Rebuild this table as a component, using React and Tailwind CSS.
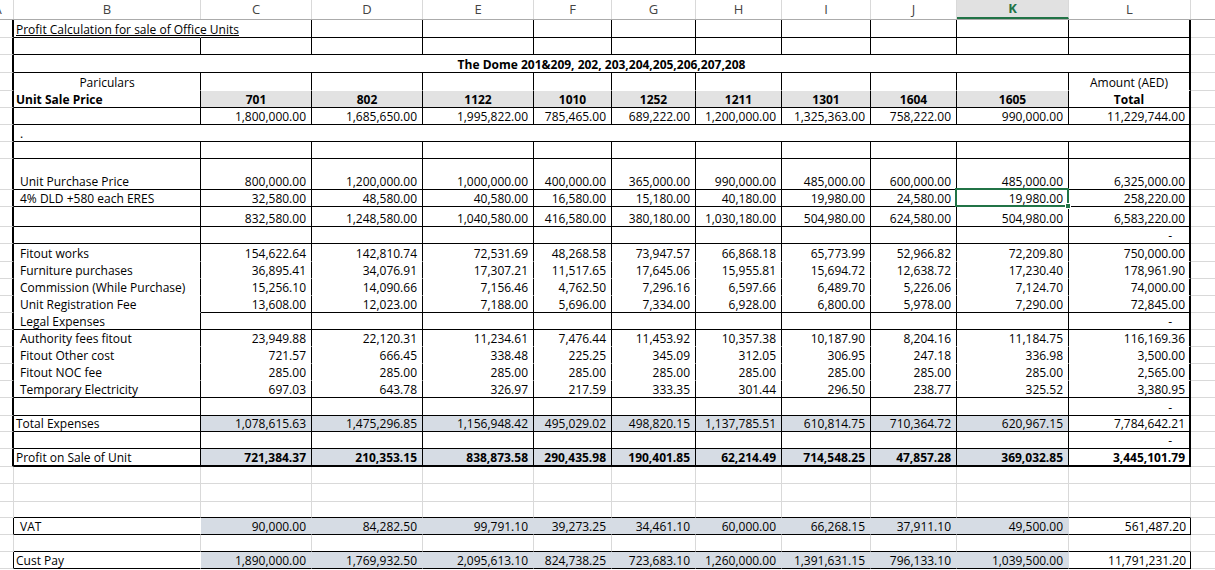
import React from 'react';

const W = ['w-[14px]', 'w-[187px]', 'w-[111px]', 'w-[111px]', 'w-[111px]', 'w-[78px]', 'w-[84px]', 'w-[86px]', 'w-[89px]', 'w-[86px]', 'w-[112px]', 'w-[122px]'];
const LETTERS = ['A', 'B', 'C', 'D', 'E', 'F', 'G', 'H', 'I', 'J', 'K', 'L'];

const BOTTOM = {
  black: 'border-b border-b-black',
  none: 'border-b border-b-transparent',
  thick: 'border-b-2 border-b-black',
  grid: 'border-b border-b-[#d9d9d9]',
};

const rows = [
  { h: 'h-[18px]', v: 'title', label: 'Profit Calculation for sale of Office Units', labelCls: 'pl-[2px] underline whitespace-nowrap relative z-10' },
  { h: 'h-[17px]' },
  { h: 'h-[18px]', merged: 'The Dome 201&209, 202, 203,204,205,206,207,208', mergedCls: 'justify-center font-bold' },
  { h: 'h-[18px]', label: 'Pariculars', labelCls: 'justify-center', total: 'Amount (AED)', totalCls: 'justify-center', bottom: 'none' },
  { h: 'h-[17px]', label: 'Unit Sale Price', labelCls: 'pl-[2px] font-bold', vals: ['701', '802', '1122', '1010', '1252', '1211', '1301', '1604', '1605'], fill: 'gray', bold: true, center: true, total: 'Total', totalCls: 'justify-center font-bold' },
  { h: 'h-[17px]', vals: ['1,800,000.00', '1,685,650.00', '1,995,822.00', '785,465.00', '689,222.00', '1,200,000.00', '1,325,363.00', '758,222.00', '990,000.00'], total: '11,229,744.00' },
  { h: 'h-[17px]', merged: '.', mergedCls: 'pl-[6px]' },
  { h: 'h-[17px]' },
  { h: 'h-[31px]', label: 'Unit Purchase Price', vals: ['800,000.00', '1,200,000.00', '1,000,000.00', '400,000.00', '365,000.00', '990,000.00', '485,000.00', '600,000.00', '485,000.00'], total: '6,325,000.00' },
  { h: 'h-[17px]', label: '4% DLD +580 each ERES', vals: ['32,580.00', '48,580.00', '40,580.00', '16,580.00', '15,180.00', '40,180.00', '19,980.00', '24,580.00', '19,980.00'], total: '258,220.00', sel: true },
  { h: 'h-[20px]', vals: ['832,580.00', '1,248,580.00', '1,040,580.00', '416,580.00', '380,180.00', '1,030,180.00', '504,980.00', '624,580.00', '504,980.00'], total: '6,583,220.00' },
  { h: 'h-[17px]', total: '-' },
  { h: 'h-[18px]', label: 'Fitout works', vals: ['154,622.64', '142,810.74', '72,531.69', '48,268.58', '73,947.57', '66,868.18', '65,773.99', '52,966.82', '72,209.80'], total: '750,000.00', bottom: 'none' },
  { h: 'h-[17px]', label: 'Furniture purchases', vals: ['36,895.41', '34,076.91', '17,307.21', '11,517.65', '17,645.06', '15,955.81', '15,694.72', '12,638.72', '17,230.40'], total: '178,961.90', bottom: 'none' },
  { h: 'h-[17px]', label: 'Commission (While Purchase)', vals: ['15,256.10', '14,090.66', '7,156.46', '4,762.50', '7,296.16', '6,597.66', '6,489.70', '5,226.06', '7,124.70'], total: '74,000.00', bottom: 'none' },
  { h: 'h-[17px]', label: 'Unit Registration Fee', vals: ['13,608.00', '12,023.00', '7,188.00', '5,696.00', '7,334.00', '6,928.00', '6,800.00', '5,978.00', '7,290.00'], total: '72,845.00', bottom: 'partial' },
  { h: 'h-[17px]', label: 'Legal Expenses', total: '-' },
  { h: 'h-[17px]', label: 'Authority fees fitout', vals: ['23,949.88', '22,120.31', '11,234.61', '7,476.44', '11,453.92', '10,357.38', '10,187.90', '8,204.16', '11,184.75'], total: '116,169.36', bottom: 'none' },
  { h: 'h-[17px]', label: 'Fitout Other cost', vals: ['721.57', '666.45', '338.48', '225.25', '345.09', '312.05', '306.95', '247.18', '336.98'], total: '3,500.00', bottom: 'none' },
  { h: 'h-[17px]', label: 'Fitout NOC fee', vals: ['285.00', '285.00', '285.00', '285.00', '285.00', '285.00', '285.00', '285.00', '285.00'], total: '2,565.00', bottom: 'none' },
  { h: 'h-[17px]', label: 'Temporary Electricity', vals: ['697.03', '643.78', '326.97', '217.59', '333.35', '301.44', '296.50', '238.77', '325.52'], total: '3,380.95' },
  { h: 'h-[18px]', total: '-' },
  { h: 'h-[16px]', label: 'Total Expenses', labelCls: 'pl-[2px]', vals: ['1,078,615.63', '1,475,296.85', '1,156,948.42', '495,029.02', '498,820.15', '1,137,785.51', '610,814.75', '710,364.72', '620,967.15'], total: '7,784,642.21', fill: 'blue' },
  { h: 'h-[17px]', total: '-' },
  { h: 'h-[18px]', label: 'Profit on Sale of Unit', labelCls: 'pl-[2px]', vals: ['721,384.37', '210,353.15', '838,873.58', '290,435.98', '190,401.85', '62,214.49', '714,548.25', '47,857.28', '369,032.85'], total: '3,445,101.79', fill: 'blue', bold: true, bottom: 'thick' },
  { h: 'h-[17px]', zone: 'outside', bottom: 'grid' },
  { h: 'h-[18px]', zone: 'outside', bottom: 'grid' },
  { h: 'h-[16px]', zone: 'outside', bottom: 'black' },
  { h: 'h-[17px]', zone: 'boxed', label: 'VAT', vals: ['90,000.00', '84,282.50', '99,791.10', '39,273.25', '34,461.10', '60,000.00', '66,268.15', '37,911.10', '49,500.00'], total: '561,487.20', fill: 'blue' },
  { h: 'h-[17px]', zone: 'outside', bottom: 'black' },
  { h: 'h-[17px]', zone: 'boxed', label: 'Cust Pay', labelCls: 'pl-[2px]', vals: ['1,890,000.00', '1,769,932.50', '2,095,613.10', '824,738.25', '723,683.10', '1,260,000.00', '1,391,631.15', '796,133.10', '1,039,500.00'], total: '11,791,231.20', fill: 'blue' },
];

function edgeClass(zone) {
  if (zone === 'table') return 'border-r-2 border-r-black';
  if (zone === 'boxed') return 'border-r border-r-black';
  return 'border-r border-r-[#d9d9d9]';
}

function innerClass(zone, v, isB) {
  if (zone === 'outside') return 'border-r border-r-[#d9d9d9]';
  if (zone === 'boxed') return 'border-r border-r-transparent';
  if (v === 'title' && isB) return 'border-r border-r-transparent';
  return 'border-r border-r-black';
}

function SheetRow({ r }) {
  const zone = r.zone || 'table';
  const bottom = r.bottom || 'black';
  const bB = bottom === 'partial' ? BOTTOM.none : BOTTOM[bottom];
  const bV = bottom === 'partial' ? BOTTOM.black : BOTTOM[bottom];
  const fillCls = r.fill === 'gray' ? 'bg-[#e2e2e2]' : r.fill === 'blue' ? 'bg-[#d6dce4]' : '';
  const vals = r.vals || [];

  return (
    <div className={`flex ${r.h}`}>
      <div className={`${W[0]} shrink-0 border-b border-b-[#d9d9d9] ${edgeClass(zone)}`} />
      {r.merged ? (
        <div className={`w-[1177px] shrink-0 flex items-end leading-[14px] ${BOTTOM.black} border-r-2 border-r-black ${r.mergedCls}`}>
          {r.merged}
        </div>
      ) : (
        <>
          <div className={`${W[1]} shrink-0 flex items-end leading-[14px] ${bB} ${innerClass(zone, r.v, true)} ${r.labelCls || 'pl-[6px]'}`}>
            {r.label}
          </div>
          {Array.from({ length: 9 }).map((_, i) => (
            <div
              key={i}
              className={`${W[i + 2]} shrink-0 relative flex items-end leading-[14px] ${bV} ${innerClass(zone, r.v, false)} ${fillCls} ${r.center ? 'justify-center' : 'justify-end pr-[5px]'} ${r.bold ? 'font-bold' : ''}`}
            >
              {vals[i]}
              {r.sel && i === 8 && (
                <div className="absolute -left-[2px] -top-[2px] -right-px -bottom-px border-2 border-[#217346] z-10">
                  <div className="absolute -right-[4px] -bottom-[4px] w-[6px] h-[6px] bg-[#217346] border border-white" />
                </div>
              )}
            </div>
          ))}
          <div className={`${W[11]} shrink-0 flex items-end leading-[14px] ${bV} ${edgeClass(zone)} ${r.totalCls || (r.total === '-' ? 'justify-end pr-[17px]' : 'justify-end pr-[4px]')} ${r.bold ? 'font-bold' : ''}`}>
            {r.total}
          </div>
        </>
      )}
      <div className="flex-1 border-b border-b-[#d9d9d9]" />
    </div>
  );
}

export default function App() {
  return (
    <div className="w-[1215px] h-[570px] overflow-hidden bg-white text-black text-[12px] font-['Open_Sans',sans-serif]">
      <div className="flex h-[20px] border-b border-[#ababab] text-[#444] text-[13px]">
        {LETTERS.map((l, i) => (
          <div
            key={l}
            className={`${W[i]} shrink-0 flex items-center justify-center overflow-hidden border-r border-r-[#d9d9d9] ${i === 10 ? 'bg-[#e1e1e1] text-[#217346] font-bold border-b-2 border-b-[#217346]' : ''}`}
          >
            <span className={i === 0 ? '-translate-x-[9px]' : ''}>{l}</span>
          </div>
        ))}
        <div className="flex-1" />
      </div>
      {rows.map((r, i) => (
        <SheetRow key={i} r={r} />
      ))}
    </div>
  );
}
